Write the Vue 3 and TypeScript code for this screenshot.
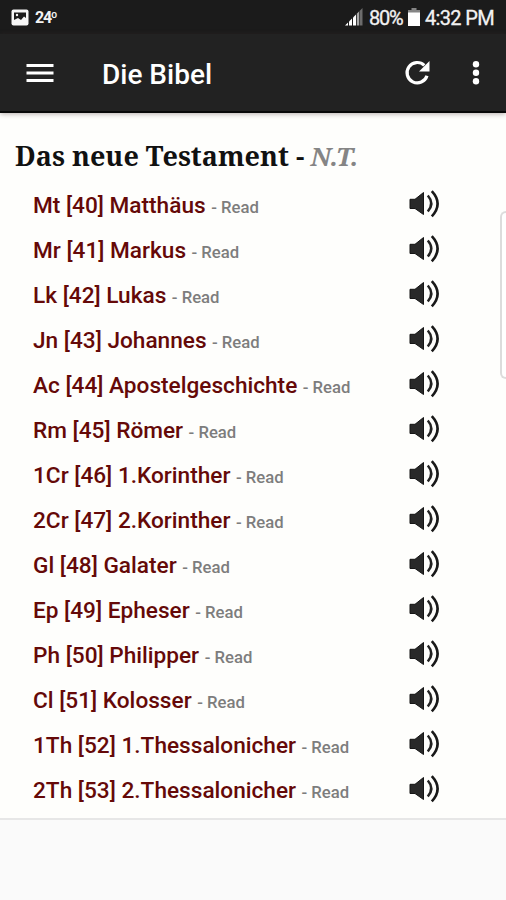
<script setup lang="ts">
interface Book {
  code: string
  number: number
  title: string
}

const books: Book[] = [
  { code: 'Mt', number: 40, title: 'Matthäus' },
  { code: 'Mr', number: 41, title: 'Markus' },
  { code: 'Lk', number: 42, title: 'Lukas' },
  { code: 'Jn', number: 43, title: 'Johannes' },
  { code: 'Ac', number: 44, title: 'Apostelgeschichte' },
  { code: 'Rm', number: 45, title: 'Römer' },
  { code: '1Cr', number: 46, title: '1.Korinther' },
  { code: '2Cr', number: 47, title: '2.Korinther' },
  { code: 'Gl', number: 48, title: 'Galater' },
  { code: 'Ep', number: 49, title: 'Epheser' },
  { code: 'Ph', number: 50, title: 'Philipper' },
  { code: 'Cl', number: 51, title: 'Kolosser' },
  { code: '1Th', number: 52, title: '1.Thessalonicher' },
  { code: '2Th', number: 53, title: '2.Thessalonicher' },
]
</script>

<template>
  <div class="screen">
    <header class="status">
      <svg class="photo" width="18" height="17" viewBox="0 0 18 17">
        <rect x="0.5" y="0.5" width="17" height="16" rx="2" fill="#f6f6f6" />
        <path d="M3 3.5h12v5.5l-2-1.5-3 3.5-3-2L3 11z" fill="#1b1b1b" />
        <circle cx="6" cy="6" r="1.2" fill="#f6f6f6" />
      </svg>
      <span class="temp">24<span class="degree">º</span></span>
      <span class="spacer"></span>
      <svg class="signal" width="18" height="18" viewBox="0 0 18 18">
        <path d="M0 17.5L3 14.5V17.5z" fill="#fff" />
        <path d="M4 13.5L7 10.5V17.5H4z" fill="#fff" />
        <path d="M8 9.5L11 6.5V17.5H8z" fill="#fff" />
        <path d="M11.8 5.7L14 3.5V17.5H11.8z" fill="#aaa" />
        <path d="M14.5 3L17.5 0V17.5H14.5z" fill="#6c6c6c" />
      </svg>
      <span class="percent">80%</span>
      <svg class="battery" width="12" height="18" viewBox="0 0 12 18">
        <path d="M3.5 0h5v2H12v3H0V2h3.5z" fill="#858585" />
        <path d="M0 4.5h12V18H0z" fill="#fff" />
      </svg>
      <span class="clock">4:32 PM</span>
    </header>

    <nav class="toolbar">
      <svg class="menu" width="28" height="22" viewBox="0 0 28 22">
        <path d="M0.5 3.5h27M0.5 11h27M0.5 18.5h27" stroke="#fff" stroke-width="3" />
      </svg>
      <h1 class="app-title">Die Bibel</h1>
      <span class="spacer"></span>
      <svg class="reload" width="26" height="26" viewBox="0 0 26 26">
        <path d="M20.3 5.3A10.2 10.2 0 1 0 23 15.8" fill="none" stroke="#fff" stroke-width="3.2" />
        <path d="M25.5 1v10.5H15z" fill="#fff" />
      </svg>
      <svg class="more" width="8" height="26" viewBox="0 0 8 26">
        <circle cx="4" cy="4.3" r="3.2" fill="#fff" />
        <circle cx="4" cy="12.8" r="3.2" fill="#fff" />
        <circle cx="4" cy="21.3" r="3.2" fill="#fff" />
      </svg>
    </nav>

    <main class="content">
      <h2 class="heading"><span class="testament">Das neue Testament -</span><em class="abbr">N.T.</em></h2>
      <ul class="books">
        <li v-for="book in books" :key="book.number" class="book">
          <span class="name">{{ book.code }} [{{ book.number }}] {{ book.title }}</span>
          <span class="read">- Read</span>
          <svg class="speaker" width="31" height="28" viewBox="0 0 31 28">
            <path d="M1 9.3h5L14.5 2.5v22L6 18.500H1z" fill="#292929" stroke="#151515" stroke-width="1" />
            <path d="M18.8 5.5q7 8 0 16" fill="none" stroke="#222" stroke-width="2.5" />
            <path d="M22.8 1.2q11.6 12.5 0 25.2" fill="none" stroke="#191919" stroke-width="2.6" />
          </svg>
        </li>
      </ul>
      <div class="scroll-handle"></div>
    </main>
    <footer class="ad-space"></footer>
  </div>
</template>

<style>
body {
  margin: 0;
}
</style>

<style scoped>
.screen {
  width: 506px;
  height: 900px;
  display: flex;
  flex-direction: column;
  overflow: hidden;
  background: #fefefc;
  font-family: Roboto, sans-serif;
}
.spacer {
  flex: 1;
}
.status {
  height: 34px;
  flex: none;
  display: flex;
  align-items: center;
  box-sizing: border-box;
  padding: 0 12px 0 11px;
  background: #1b1b1b;
  color: #f2f2f2;
}
.temp {
  margin: 1px 0 0 6px;
  font-size: 16px;
  font-weight: 700;
  letter-spacing: -1.3px;
}
.degree {
  font-size: 15px;
}
.signal {
  margin-right: 6px;
}
.percent,
.clock {
  font-size: 20px;
  line-height: 34px;
  white-space: nowrap;
  margin-top: 2px;
  -webkit-text-stroke: 0.3px #f2f2f2;
}
.percent {
  width: 35px;
  letter-spacing: -1.2px;
}
.battery {
  margin: 0 5px 0 4px;
}
.clock {
  width: 69px;
  letter-spacing: -0.66px;
}
.toolbar {
  height: 79px;
  flex: none;
  display: flex;
  align-items: center;
  box-sizing: border-box;
  padding: 0 26px;
  background: #222;
  border-bottom: 2px solid #080808;
  box-shadow: 0 1px 5px rgba(70, 50, 50, 0.4);
  position: relative;
}
.app-title {
  margin: 4px 0 0 48px;
  color: #fff;
  font-size: 28px;
  font-weight: 500;
  line-height: 34px;
}
.reload {
  margin-top: 1px;
}
.more {
  margin: 1px 0 0 42px;
}
.content {
  flex: 1;
  position: relative;
  border-bottom: 2px solid #e7e7e7;
}
.heading {
  display: flex;
  align-items: baseline;
  margin: 26px 0 0 15px;
  height: 44px;
  line-height: 34px;
  font-family: "Noto Serif", "DejaVu Serif Condensed", "DejaVu Serif", serif;
  font-size: 27px;
  font-weight: 700;
  color: #111;
  white-space: nowrap;
}
.abbr {
  margin-left: 6px;
  color: #858585;
  font-size: 26px;
  letter-spacing: -0.2px;
}
.books {
  list-style: none;
  margin: 0;
  padding: 0 66px 0 33px;
}
.book {
  height: 45px;
  display: flex;
  align-items: baseline;
  line-height: 45px;
  white-space: nowrap;
}
.name {
  color: #650908;
  font-size: 22.63px;
  font-weight: 500;
}
.read {
  margin-left: 5.5px;
  color: #7d7d7d;
  font-size: 16.7px;
  font-weight: 500;
}
.speaker {
  align-self: flex-start;
  margin: 6.5px 0 0 auto;
}
.scroll-handle {
  position: absolute;
  top: 98px;
  right: 0;
  width: 6px;
  height: 168px;
  box-sizing: border-box;
  border: 2px solid #dcdcdc;
  border-right: 0;
  border-radius: 6px 0 0 6px;
  background: #fff;
}
.ad-space {
  flex: none;
  height: 80px;
  background: #fafafa;
}
</style>
